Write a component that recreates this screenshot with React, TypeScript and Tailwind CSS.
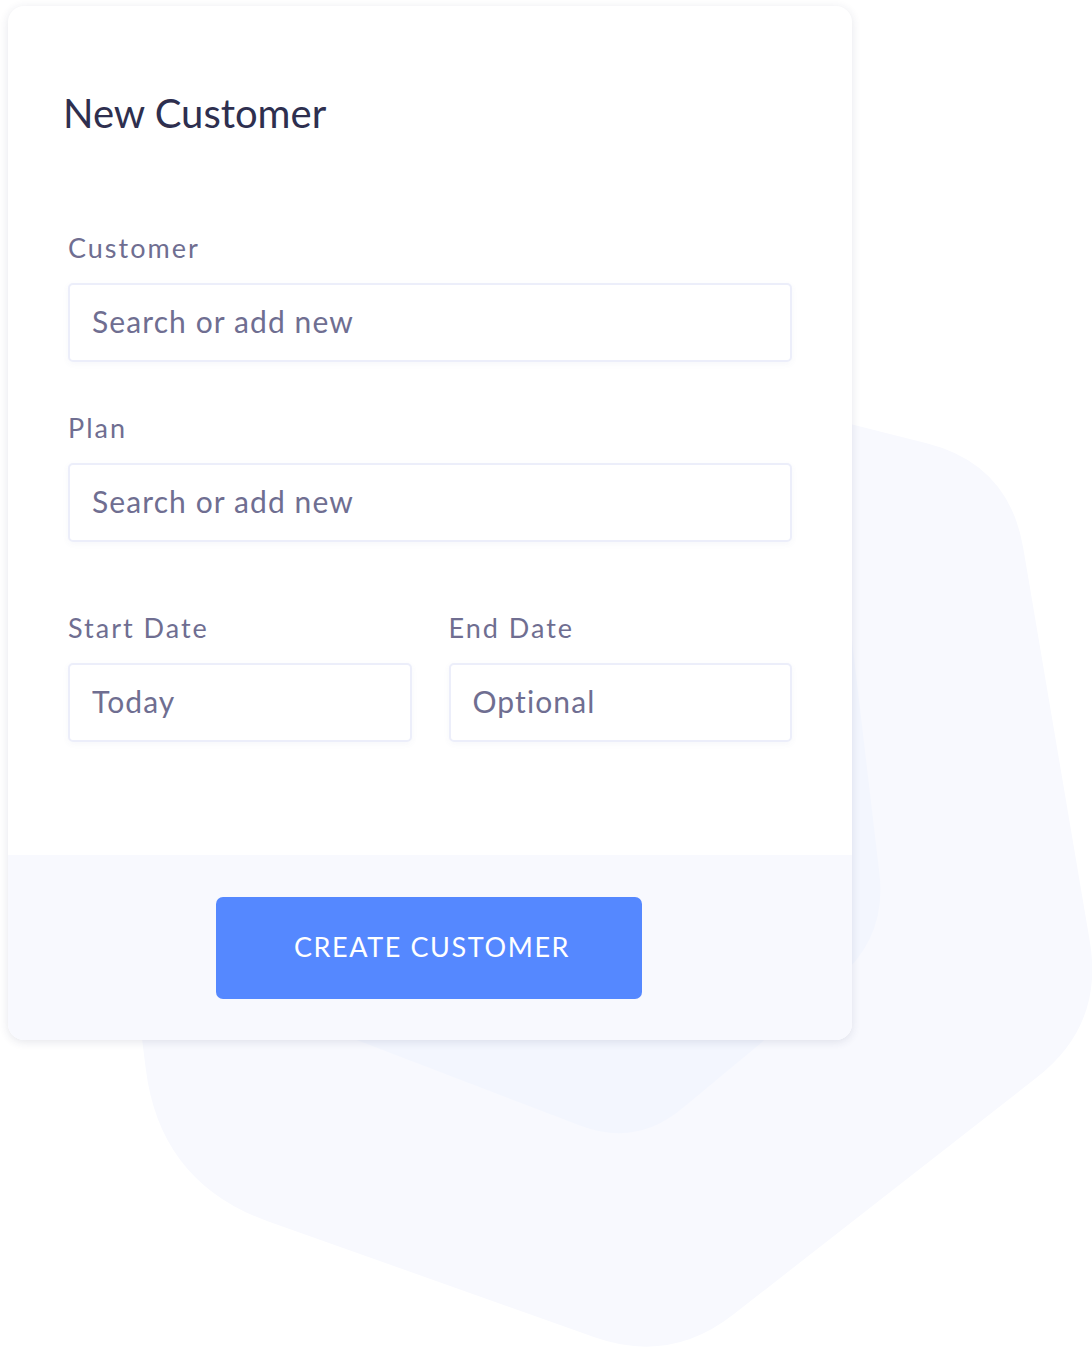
import React from 'react';

type Pt = [number, number];

// builds a closed path with rounded corners (quadratic) from sharp vertices
const roundedPath = (pts: Pt[], radii: number[]) => {
    const n = pts.length;
    let d = '';
    for (let i = 0; i < n; i++) {
        const [px, py] = pts[i];
        const [ax, ay] = pts[(i - 1 + n) % n];
        const [bx, by] = pts[(i + 1) % n];
        const la = Math.hypot(ax - px, ay - py);
        const lb = Math.hypot(bx - px, by - py);
        const r = radii[i];
        const s = [px + ((ax - px) / la) * r, py + ((ay - py) / la) * r];
        const e = [px + ((bx - px) / lb) * r, py + ((by - py) / lb) * r];
        d += `${i === 0 ? 'M' : 'L'}${s[0].toFixed(1)} ${s[1].toFixed(1)} Q${px} ${py} ${e[0].toFixed(1)} ${e[1].toFixed(1)} `;
    }
    return d + 'Z';
};

const bigShape = roundedPath(
    [[40, 220], [1009, 464], [1104, 1025], [670, 1364], [160, 1183]],
    [60, 85, 85, 80, 115]
);

const smallShape = roundedPath(
    [[200, 320], [806, 250], [887, 938], [636, 1147], [200, 980]],
    [40, 40, 65, 60, 40]
);

const Backdrop: React.FC = () => (
    <svg className="absolute inset-0" width="1092" height="1352" viewBox="0 0 1092 1352" fill="none">
        <path d={bigShape} fill="#f8f9fe" />
        <path d={smallShape} fill="#f3f6fe" />
    </svg>
);

interface FieldProps {
    label: string;
    placeholder: string;
}

const Field: React.FC<FieldProps> = ({ label, placeholder }) => (
    <div className="flex flex-col">
        <label className="text-[27px] leading-[31px] tracking-[2px] text-[#6f6e91]">{label}</label>
        <input
            placeholder={placeholder}
            className="mt-[20px] h-[79px] w-full rounded-[5px] border-2 border-[#eceefa] bg-white pb-[3px] pl-[22px] text-[30px] tracking-[1.1px] text-[#6f6e91] shadow-[0_2px_6px_rgba(80,90,160,0.05)] outline-none placeholder:text-[#6f6e91]"
        />
    </div>
);

export default function App() {
    return (
        <div className="relative h-[1352px] w-[1092px] overflow-hidden bg-white font-['Lato',sans-serif]">
            <Backdrop />

            <div className="relative ml-[8px] mt-[6px] flex h-[1034px] w-[844px] flex-col overflow-hidden rounded-[16px] bg-white shadow-[0_2px_10px_rgba(40,50,90,0.12)]">
                <div className="flex-1 px-[60px] pt-[83px]">
                    <h1 className="-ml-[5px] text-[40px] leading-[48px] text-[#2e2f4f]">New Customer</h1>

                    <div className="mt-[95px] flex flex-col gap-[50px]">
                        <Field label="Customer" placeholder="Search or add new" />
                        <Field label="Plan" placeholder="Search or add new" />
                    </div>

                    <div className="mt-[70px] grid grid-cols-2 gap-[37px]">
                        <Field label="Start Date" placeholder="Today" />
                        <Field label="End Date" placeholder="Optional" />
                    </div>
                </div>

                <div className="flex h-[185px] items-center justify-center bg-[#f8f9fe] pr-[2px]">
                    <button className="h-[102px] w-[426px] rounded-[7px] bg-[#5588ff] pl-[6px] text-[27px] tracking-[1.6px] text-white">
                        CREATE CUSTOMER
                    </button>
                </div>
            </div>
        </div>
    );
}
